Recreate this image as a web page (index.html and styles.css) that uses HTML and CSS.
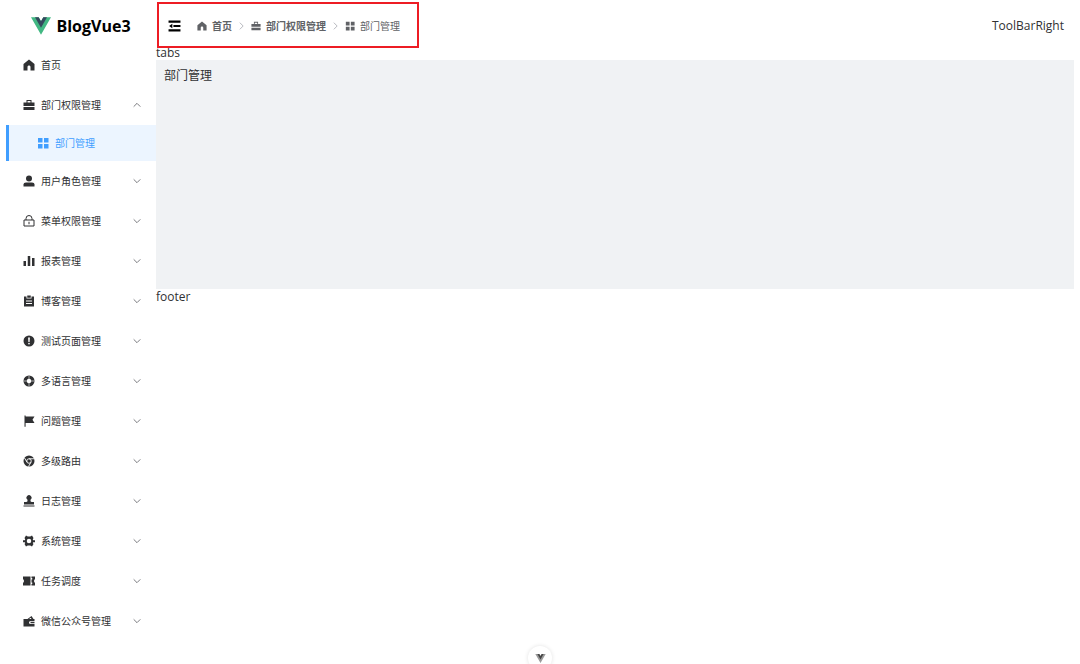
FILE: index.html
```
<!DOCTYPE html>
<html lang="zh-CN">
<head>
  <meta charset="UTF-8">
  <meta name="viewport" content="width=device-width, initial-scale=1.0">
  <title>BlogVue3</title>
  <link rel="stylesheet" href="styles.css">
</head>
<body>
  <!-- 图标 -->
  <svg class="sprite" aria-hidden="true">
    <symbol id="home" viewBox="0 0 24 24"><path d="M12 1 23 10v13h-8v-7c0-4-6-4-6 0v7H1V10z"/></symbol>
    <symbol id="briefcase" viewBox="0 0 24 24"><path d="M7 7V2h10v5h6v7H1V7zm2 0h6V4H9zM1 16h22v6H1z" fill-rule="evenodd"/></symbol>
    <symbol id="grid" viewBox="0 0 24 24"><path d="M2 2h9v9H2zM14 2h9v9h-9zM2 14h9v9H2zM14 14h9v9h-9z"/></symbol>
    <symbol id="user" viewBox="0 0 24 24"><circle cx="12" cy="7" r="6"/><path d="M1 23v-4q0-4 5-4h12q5 0 5 4v4z"/></symbol>
    <symbol id="lock" viewBox="0 0 24 24"><path d="M2 10h20v12H2zM6 10V7a6 6 0 0 1 12 0v3M12 13.500v5" fill="none" stroke="currentColor" stroke-width="2" stroke-linejoin="round"/></symbol>
    <symbol id="chart" viewBox="0 0 24 24"><path d="M1 12h5v10H1zM9.500 2h5v20h-5zM18 6h5v16h-5z"/></symbol>
    <symbol id="clipboard" viewBox="0 0 24 24"><path d="M2 3h5v4h10V3h5v20H2zM6 11v2h12v-2zm0 5v2h12v-2z" fill-rule="evenodd"/><path d="M8.500 1h7v4.500h-7z"/></symbol>
    <symbol id="warning" viewBox="0 0 24 24"><path d="M12 1a11 11 0 1 0 0 22 11 11 0 0 0 0-22zm-1.800 4h3.600l-.6 9h-2.400zM12 15.500a1.700 1.700 0 1 1 0 3.400 1.700 1.700 0 0 1 0-3.400z" fill-rule="evenodd"/></symbol>
    <symbol id="help" viewBox="0 0 24 24"><path d="M12 1a11 11 0 1 0 0 22 11 11 0 0 0 0-22zm0 6.500a4.500 4.500 0 1 1 0 9 4.500 4.500 0 0 1 0-9z" fill-rule="evenodd"/><path d="M12 2v6M12 16v6M2 12h6M16 12h6" stroke="#fff" stroke-width="1.200"/></symbol>
    <symbol id="flag" viewBox="0 0 24 24"><path d="M3 1h2.200v2H23l-4 6.500 4 6.500H5.200v7.500H3z"/></symbol>
    <symbol id="chrome" viewBox="0 0 24 24"><circle cx="12" cy="12" r="11"/><circle cx="12" cy="12" r="4.500" fill="none" stroke="#fff" stroke-width="1.800"/><path d="M12 7.500h10M8 14.300 3 6M16 14.300 11 23" stroke="#fff" stroke-width="1.800"/></symbol>
    <symbol id="stamp" viewBox="0 0 24 24"><path d="M9 12V9.500a5 5 0 1 1 6 0V12q0 2 3 2h4v5H2v-5h4q3 0 3-2zM1 21h22v2H1z"/></symbol>
    <symbol id="gear" viewBox="0 0 24 24"><path d="m6 1 3.500 2h5L18 1l3 5-1.500 3 1 1.500H24v4h-3.500L19.500 16l1.500 2-3 5-3.500-2h-5L6 23l-3-5 1.500-2-1-1.500H0v-4h3.500l1-1.500L3 6zM12 7.500a4.500 4.500 0 1 0 0 9 4.500 4.500 0 0 0 0-9z" fill-rule="evenodd"/></symbol>
    <symbol id="ticket" viewBox="0 0 24 24"><path d="M0 3h15v18H0v-5q4-4 0-8zM17 3h7v5q-4 4 0 8v5h-7v-3h1.500v-3H17v-6h1.500V6H17z"/></symbol>
    <symbol id="wallet" viewBox="0 0 24 24"><path d="M1 8h8l8-6 4 6h2v4h-8q-3 0-3 3t3 3h8v5H1zM12 8h5l-1.500-2.500z" fill-rule="evenodd"/><path d="M15 13.500h8v3h-8z"/></symbol>
    <symbol id="fold" viewBox="0 0 24 24"><path d="M1 2h22v4H1zM10 10h13v4H10zM1 18h22v4H1zM8 8v8l-6-4z"/></symbol>
    <symbol id="arrow" viewBox="0 0 24 24"><path d="m2 7 10 10L22 7" fill="none" stroke="currentColor" stroke-width="2.500"/></symbol>
    <symbol id="vue" viewBox="0 0 196 170"><path fill="#42b883" d="M120.800 0 98 39.300 75.200 0H0l98 170L196 0z"/><path fill="#35495e" d="M120.800 0 98 39.300 75.200 0H39.200L98 102 156.800 0z"/></symbol>
  </svg>

  <div class="layout">
    <aside class="sidebar">
      <div class="logo">
        <svg class="logo-img"><use href="#vue"/></svg>
        <span>BlogVue3</span>
      </div>
      <nav class="menu">
        <a class="menu-item" href="#"><svg class="icon"><use href="#home"/></svg>首页</a>
        <button class="menu-item open"><svg class="icon"><use href="#briefcase"/></svg>部门权限管理<svg class="arrow"><use href="#arrow"/></svg></button>
        <a class="menu-item sub active" href="#"><svg class="icon"><use href="#grid"/></svg>部门管理</a>
        <button class="menu-item"><svg class="icon"><use href="#user"/></svg>用户角色管理<svg class="arrow"><use href="#arrow"/></svg></button>
        <button class="menu-item"><svg class="icon"><use href="#lock"/></svg>菜单权限管理<svg class="arrow"><use href="#arrow"/></svg></button>
        <button class="menu-item"><svg class="icon"><use href="#chart"/></svg>报表管理<svg class="arrow"><use href="#arrow"/></svg></button>
        <button class="menu-item"><svg class="icon"><use href="#clipboard"/></svg>博客管理<svg class="arrow"><use href="#arrow"/></svg></button>
        <button class="menu-item"><svg class="icon"><use href="#warning"/></svg>测试页面管理<svg class="arrow"><use href="#arrow"/></svg></button>
        <button class="menu-item"><svg class="icon"><use href="#help"/></svg>多语言管理<svg class="arrow"><use href="#arrow"/></svg></button>
        <button class="menu-item"><svg class="icon"><use href="#flag"/></svg>问题管理<svg class="arrow"><use href="#arrow"/></svg></button>
        <button class="menu-item"><svg class="icon"><use href="#chrome"/></svg>多级路由<svg class="arrow"><use href="#arrow"/></svg></button>
        <button class="menu-item"><svg class="icon"><use href="#stamp"/></svg>日志管理<svg class="arrow"><use href="#arrow"/></svg></button>
        <button class="menu-item"><svg class="icon"><use href="#gear"/></svg>系统管理<svg class="arrow"><use href="#arrow"/></svg></button>
        <button class="menu-item"><svg class="icon"><use href="#ticket"/></svg>任务调度<svg class="arrow"><use href="#arrow"/></svg></button>
        <button class="menu-item"><svg class="icon"><use href="#wallet"/></svg>微信公众号管理<svg class="arrow"><use href="#arrow"/></svg></button>
      </nav>
    </aside>

    <div class="container">
      <header class="header">
        <div class="toolbar-left">
          <button class="collapse" aria-label="折叠菜单"><svg class="fold"><use href="#fold"/></svg></button>
          <nav class="breadcrumb">
            <a class="crumb" href="#"><svg class="crumb-icon"><use href="#home"/></svg>首页</a>
            <svg class="separator"><use href="#arrow"/></svg>
            <a class="crumb" href="#"><svg class="crumb-icon"><use href="#briefcase"/></svg>部门权限管理</a>
            <svg class="separator"><use href="#arrow"/></svg>
            <span class="crumb current"><svg class="crumb-icon"><use href="#grid"/></svg>部门管理</span>
          </nav>
        </div>
        <div>ToolBarRight</div>
      </header>
      <div class="tabs">tabs</div>
      <main class="main">部门管理</main>
      <footer class="footer">footer</footer>
    </div>
  </div>

  <!-- 悬浮按钮 -->
  <button class="devtools" aria-label="Vue DevTools"><svg class="devtools-icon"><use href="#vue"/></svg></button>
</body>
</html>
```
FILE: styles.css
```
* {
  box-sizing: border-box;
}
body {
  margin: 0;
  font-family: "Open Sans", "Noto Sans CJK SC", sans-serif;
  font-size: 12px;
  line-height: 14px;
  color: #303133;
  background-color: #fff;
}
button {
  font: inherit;
  color: inherit;
  background: none;
  border: none;
  padding: 0;
  cursor: pointer;
}
a {
  color: inherit;
  text-decoration: none;
}
svg {
  fill: currentColor;
  flex-shrink: 0;
}
.sprite {
  display: none;
}
.layout {
  display: flex;
  padding: 0 6px;
}

/* 侧边栏 */
.sidebar {
  width: 150px;
  flex-shrink: 0;
}
.logo {
  display: flex;
  align-items: center;
  justify-content: center;
  gap: 5px;
  height: 45px;
  padding-top: 6px;
  font-size: 16px;
  font-weight: bold;
  color: #000;
}
.logo-img {
  width: 20px;
  height: 18px;
}
.menu-item {
  display: flex;
  align-items: center;
  gap: 6px;
  width: 100%;
  height: 40px;
  padding: 0 15px 0 17px;
  font-size: 10px;
}
.menu-item.sub {
  height: 36px;
  padding-left: 28px;
  border-left: 3px solid #409eff;
}
.menu-item.active {
  color: #409eff;
  background-color: #ecf5ff;
}
.icon {
  width: 12px;
  height: 12px;
}
.arrow {
  width: 8px;
  height: 8px;
  margin-left: auto;
  color: #606266;
}
.open .arrow {
  transform: rotate(180deg);
}

/* 右侧内容 */
.container {
  flex: 1;
  min-width: 0;
}
.header {
  display: flex;
  align-items: center;
  justify-content: space-between;
  height: 46px;
  padding: 6px 10px 0 12px;
}
.toolbar-left {
  position: relative;
  display: flex;
  align-items: center;
  gap: 16px;
}
.toolbar-left::after {
  content: "";
  position: absolute;
  inset: -17px -19px -15px -11px;
  border: 2px solid #ed1c24;
  pointer-events: none;
}
.collapse {
  display: flex;
  color: #000;
}
.fold {
  width: 13px;
  height: 14px;
}
.breadcrumb {
  display: flex;
  align-items: center;
  gap: 5px;
  font-size: 10px;
}
.crumb {
  display: flex;
  align-items: center;
  gap: 5px;
  font-weight: bold;
  color: #606266;
}
.crumb.current {
  font-weight: normal;
}
.crumb-icon {
  width: 10px;
  height: 10px;
}
.separator {
  width: 9px;
  height: 8px;
  color: #a8abb2;
  transform: rotate(-90deg);
}
.main {
  min-height: 229px;
  padding: 9px 8px;
  background-color: #f0f2f4;
}
.footer {
  padding-top: 1px;
}

.devtools {
  position: fixed;
  bottom: -6px;
  left: 50%;
  display: flex;
  align-items: center;
  justify-content: center;
  width: 24px;
  height: 24px;
  margin-left: -12px;
  border-radius: 50%;
  background-color: #fff;
  box-shadow: 0 0 4px rgba(0, 0, 0, 0.12);
}
.devtools-icon {
  width: 11px;
  height: 9px;
  filter: grayscale(1);
}
```
